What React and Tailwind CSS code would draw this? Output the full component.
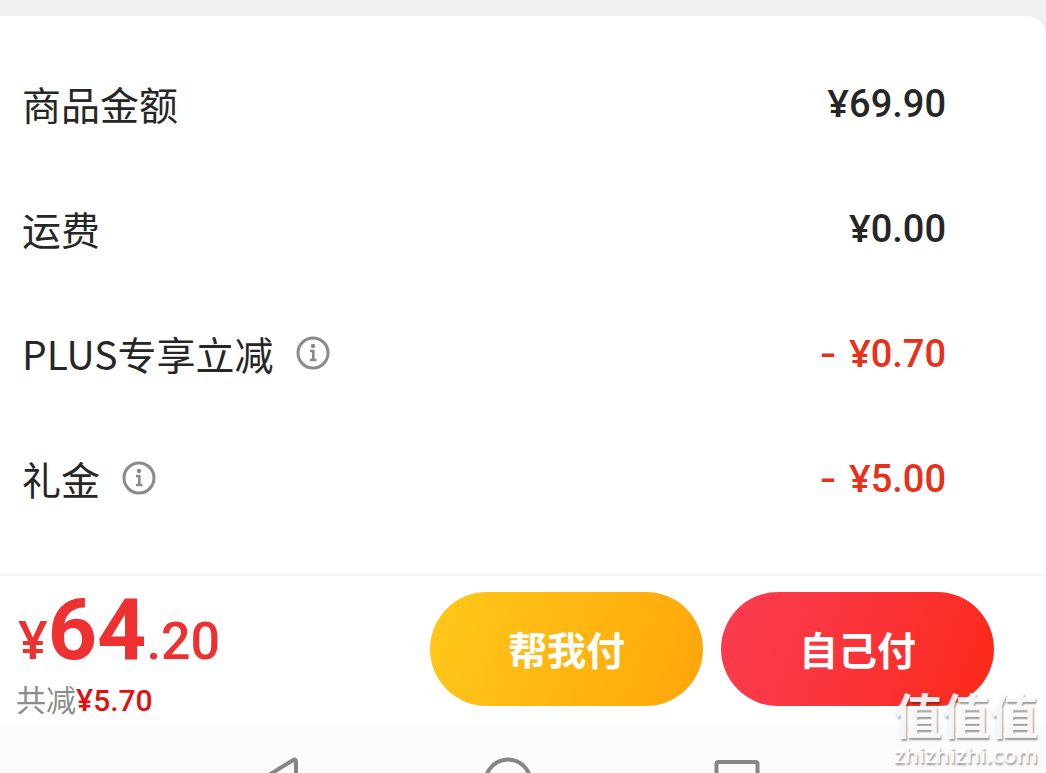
import React from 'react';
import clsx from 'clsx';

const items = [
  { label: '商品金额', amount: '69.90' },
  { label: '运费', amount: '0.00' },
  { label: 'PLUS专享立减', amount: '0.70', discount: true, info: true },
  { label: '礼金', amount: '5.00', discount: true, info: true },
];

// ── Icons ─────────────────────────────────────────────────────────────────────
function InfoIcon() {
  return (
    <svg viewBox="0 0 34 34" className="w-[34px] h-[34px]" fill="none" stroke="#8a8a8a">
      <circle cx="17" cy="17" r="15" strokeWidth="3" />
      <circle cx="17" cy="10" r="2.2" fill="#8a8a8a" stroke="none" />
      <path d="M14 15H17.3V24M14 24H20.6" strokeWidth="2.6" />
    </svg>
  );
}

function BackIcon() {
  return (
    <svg viewBox="0 0 48 48" className="w-12 h-12" fill="none" stroke="#868686" strokeWidth="4" strokeLinejoin="round">
      <path d="M40 5.5Q40 2.5 37.3 4L3 25L40 47Z" />
    </svg>
  );
}

function HomeIcon() {
  return (
    <svg viewBox="0 0 48 48" className="w-12 h-12" fill="none" stroke="#868686" strokeWidth="4">
      <circle cx="24" cy="26" r="22.5" />
    </svg>
  );
}

function RecentsIcon() {
  return (
    <svg viewBox="0 0 48 48" className="w-12 h-12" fill="none" stroke="#868686" strokeWidth="4" strokeLinejoin="round">
      <rect x="4.5" y="6" width="41" height="41" rx="2" />
    </svg>
  );
}

function Yen() {
  return <span className="font-['Noto_Sans',sans-serif] font-semibold">¥</span>;
}

// ── Price rows ────────────────────────────────────────────────────────────────
function PriceRow({ label, amount, discount, info }) {
  return (
    <div className="flex items-center justify-between h-[125px]">
      <dt className="flex items-center gap-[22px] text-[39px] leading-[56px] text-[#262626]">
        {label}
        {info && (
          <button type="button" aria-label={label}>
            <InfoIcon />
          </button>
        )}
      </dt>
      <dd
        className={clsx(
          "flex items-center gap-3 font-['Roboto',sans-serif] font-medium text-[38px] leading-[56px]",
          discount ? 'text-[#e8301a]' : 'text-[#262626]'
        )}
      >
        {discount && <span className="font-['Inter',sans-serif]">-</span>}
        <span>
          <Yen />
          {amount}
        </span>
      </dd>
    </div>
  );
}

function PayButton({ className, children }) {
  return (
    <button
      type="button"
      className={clsx('w-[273px] h-[114px] pb-0.5 rounded-full text-white text-[39px] font-bold', className)}
    >
      {children}
    </button>
  );
}

export default function App() {
  return (
    <div className="relative flex flex-col h-screen overflow-hidden bg-[#f0f0f0] pt-4 font-['Noto_Sans_CJK_SC',sans-serif]">
      <dl className="bg-white rounded-tr-[20px] pt-6 pb-[34px] pl-[22px] pr-[100px]">
        {items.map((item) => (
          <PriceRow key={item.label} {...item} />
        ))}
      </dl>

      {/* Checkout bar */}
      <footer className="flex items-start justify-between h-[150px] flex-shrink-0 bg-white border-t-2 border-[#f5f5f5] pt-4 pl-4 pr-[52px]">
        <div>
          <p className="flex items-baseline pl-0.5 font-['Roboto',sans-serif] text-[#ee3030] leading-[76px] font-medium text-[52px]">
            <Yen />
            <span className="text-[86px] font-bold">64</span>.20
          </p>
          <p className="flex items-baseline text-[30px] leading-9 text-[#8c8c8c]">
            共减
            <span className="font-['Roboto',sans-serif] font-medium text-[#e01010]">
              <Yen />
              5.70
            </span>
          </p>
        </div>
        <div className="flex gap-[18px]">
          <PayButton className="bg-linear-110 from-[#ffc81a] to-[#ffa509]">帮我付</PayButton>
          <PayButton className="bg-linear-110 from-[#fa3c50] to-[#fc2812]">自己付</PayButton>
        </div>
      </footer>

      {/* System navigation */}
      <nav className="flex flex-1 min-h-0 justify-center gap-[180px] bg-[#fbfbfb] overflow-hidden pt-8 pr-[30px]">
        <button type="button" aria-label="返回" className="h-12"><BackIcon /></button>
        <button type="button" aria-label="主页" className="h-12"><HomeIcon /></button>
        <button type="button" aria-label="最近" className="h-12"><RecentsIcon /></button>
      </nav>

      {/* Site watermark */}
      <div className="absolute right-2 bottom-1.5 flex flex-col items-center gap-1 text-white/90 pointer-events-none [text-shadow:1px_2px_2px_rgb(0_0_0/0.4)]">
        <span className="text-[48px] leading-[48px] font-bold">值值值</span>
        <span className="font-['Open_Sans',sans-serif] text-[22px] leading-[26px] font-semibold">zhizhizhi.com</span>
      </div>
    </div>
  );
}
